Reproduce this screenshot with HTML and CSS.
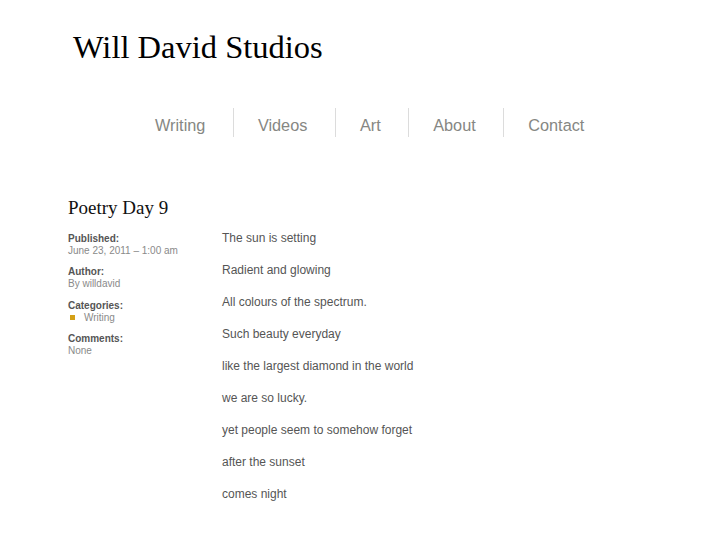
FILE: index.html
```html
<!DOCTYPE html>
<html>
<head>
<meta charset="utf-8">
<title>Will David Studios</title>
<link rel="stylesheet" href="styles.css">
</head>
<body>
<header class="site-header">
  <h1 class="site-title">Will David Studios</h1>
  <nav class="main-nav">
    <ul>
      <li class="first">Writing</li>
      <li>Videos</li>
      <li>Art</li>
      <li>About</li>
      <li>Contact</li>
    </ul>
  </nav>
</header>
<main class="post">
  <h2 class="post-title">Poetry Day 9</h2>
  <div class="post-body">
    <aside class="meta">
      <div class="meta-group">
        <div class="meta-label">Published:</div>
        <div class="meta-value">June 23, 2011 – 1:00 am</div>
      </div>
      <div class="meta-group">
        <div class="meta-label">Author:</div>
        <div class="meta-value">By willdavid</div>
      </div>
      <div class="meta-group">
        <div class="meta-label">Categories:</div>
        <div class="meta-value cat"><span class="bullet"></span>Writing</div>
      </div>
      <div class="meta-group">
        <div class="meta-label">Comments:</div>
        <div class="meta-value">None</div>
      </div>
    </aside>
    <div class="poem">
      <p>The sun is setting</p>
      <p>Radient and glowing</p>
      <p>All colours of the spectrum.</p>
      <p>Such beauty everyday</p>
      <p>like the largest diamond in the world</p>
      <p>we are so lucky.</p>
      <p>yet people seem to somehow forget</p>
      <p>after the sunset</p>
      <p>comes night</p>
    </div>
  </div>
</main>
</body>
</html>
```
FILE: styles.css
```css
html, body {
  margin: 0;
  padding: 0;
  background: #fff;
}
body {
  font-family: "Liberation Sans", Arial, sans-serif;
  width: 727px;
}
.site-header {
  padding-top: 29px;
}
.site-title {
  margin: 0 0 0 73px;
  font-family: "Liberation Serif", "Times New Roman", serif;
  font-weight: normal;
  font-size: 32.5px;
  line-height: 37px;
  color: #000;
}
.main-nav {
  margin-top: 42px;
  display: flex;
  justify-content: flex-start;
  padding-left: 129px;
}
.main-nav ul {
  list-style: none;
  margin: 0;
  padding: 0;
  display: flex;
}
.main-nav li {
  font-size: 16.3px;
  line-height: 21px;
  height: 22px;
  padding: 7px 27.5px 0 24px;
  color: #868783;
  border-left: 1px solid #dcdcdc;
}
.main-nav li.first {
  border-left: none;
  padding-left: 26px;
}
.post {
  margin: 60px 0 0 68px;
}
.post-title {
  margin: 0;
  font-family: "Liberation Serif", "Times New Roman", serif;
  font-weight: normal;
  font-size: 19px;
  line-height: 22px;
  color: #111;
}
.post-body {
  display: flex;
  margin-top: 12px;
}
.meta {
  width: 154px;
  flex: none;
  padding-top: 2px;
}
.meta-group {
  margin-bottom: 9.4px;
}
.meta-label {
  font-size: 10px;
  font-weight: bold;
  line-height: 12px;
  color: #555;
}
.meta-value {
  font-size: 10px;
  line-height: 12px;
  color: #8a8a8a;
}
.meta-value.cat {
  display: flex;
  align-items: center;
}
.bullet {
  display: inline-block;
  width: 5px;
  height: 5px;
  background: #d4a017;
  margin: 0 9px 0 2px;
}
.poem p {
  margin: 0 0 17px 0;
  font-size: 12px;
  line-height: 15px;
  color: #555;
}
```
